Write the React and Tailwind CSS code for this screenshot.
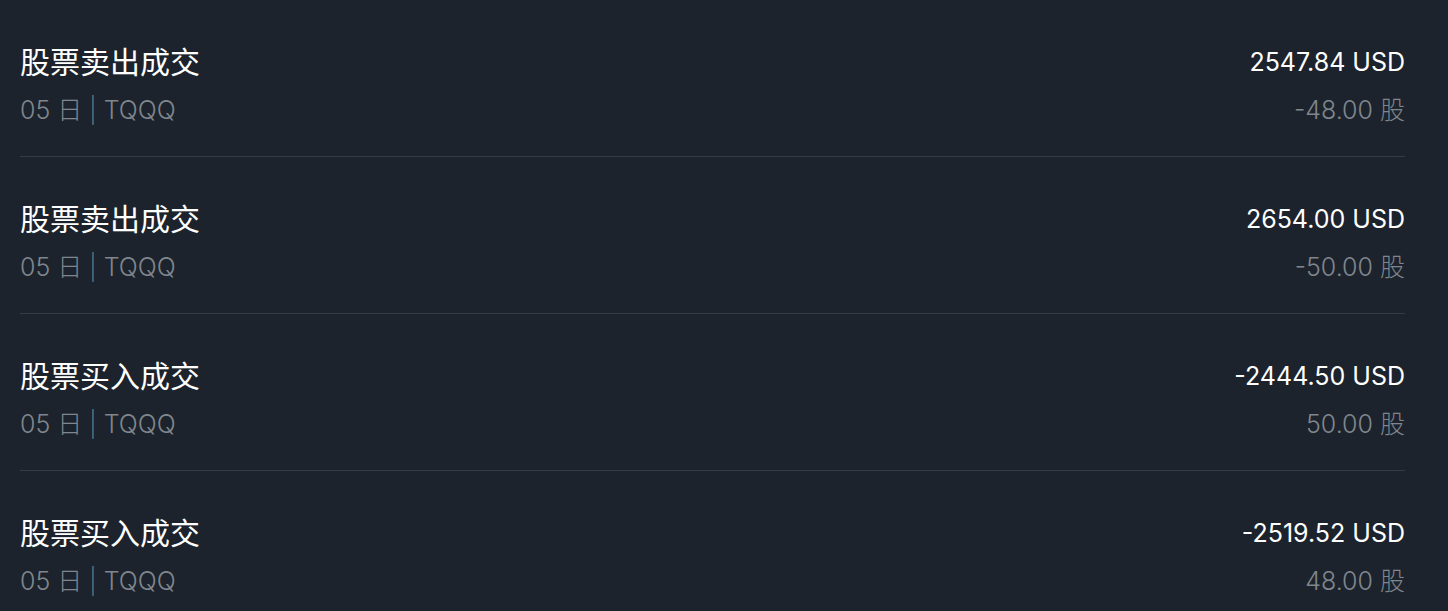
const rows = [
  { title: "股票卖出成交", amount: "2547.84 USD", qty: "-48.00 股" },
  { title: "股票卖出成交", amount: "2654.00 USD", qty: "-50.00 股" },
  { title: "股票买入成交", amount: "-2444.50 USD", qty: "50.00 股" },
  { title: "股票买入成交", amount: "-2519.52 USD", qty: "48.00 股" },
];

export default function App() {
  return (
    <div
      className="w-[1448px] h-[611px] overflow-hidden bg-[#1c232c] pl-[20px] pr-[43px]"
      style={{ fontFamily: 'Inter, "Noto Sans CJK SC", sans-serif' }}
    >
      {rows.map((r, i) => (
        <div
          key={i}
          className="flex justify-between border-b border-[#343b44] pt-[44px] pb-[30px]"
        >
          <div className="flex flex-col gap-[14px]">
            <div className="text-[30px] leading-[36px] text-white">{r.title}</div>
            <div className="text-[25px] leading-[32px] font-light text-[#80868d]">
              05 日 <span className="font-extralight">|</span> TQQQ
            </div>
          </div>
          <div className="flex flex-col items-end gap-[14px]">
            <div className="text-[25px] leading-[36px] text-white">{r.amount}</div>
            <div className="text-[25px] leading-[32px] font-light text-[#80868d]">{r.qty}</div>
          </div>
        </div>
      ))}
    </div>
  );
}
